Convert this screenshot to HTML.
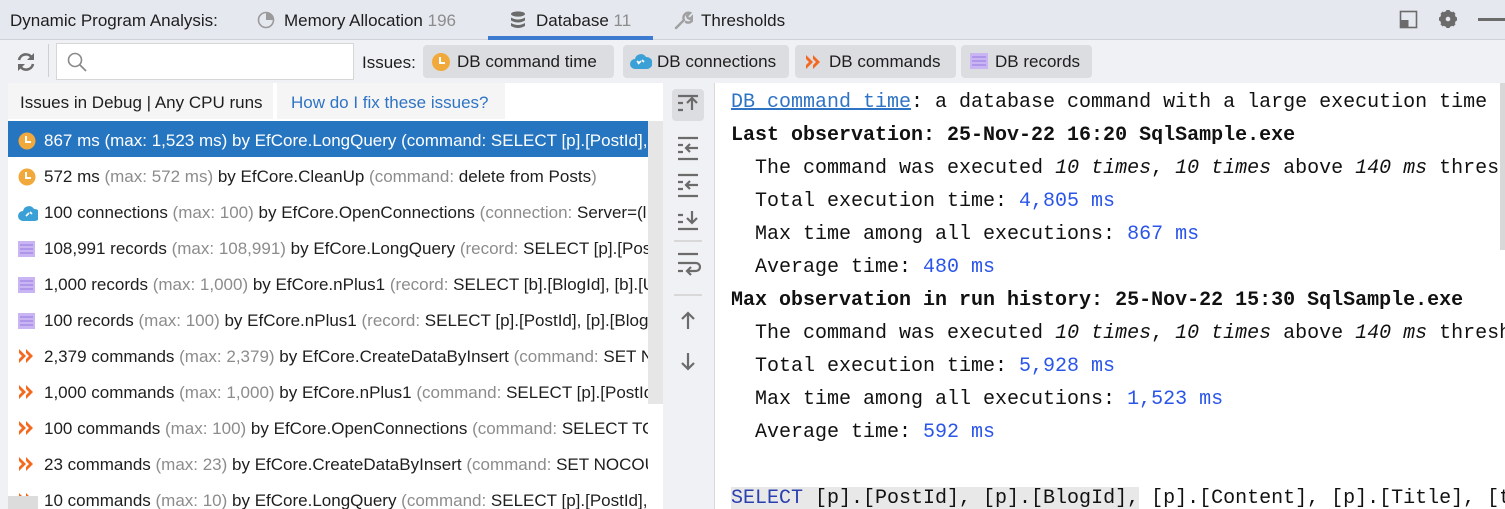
<!DOCTYPE html>
<html><head><meta charset="utf-8"><style>
*{margin:0;padding:0;box-sizing:border-box}
body{width:1505px;height:509px;overflow:hidden;background:#f0f1f4;font-family:"Liberation Sans",sans-serif;font-size:17px;color:#1e1e1e;position:relative}
.abs{position:absolute}
.top{left:0;top:0;width:1505px;height:40px;background:#e5e8ef;border-bottom:1px solid #cfd2d8}
.tab{top:1px;height:40px;line-height:40px;white-space:nowrap}
.gray{color:#8c8c8c}
.chip{top:45px;height:33px;line-height:34px;background:#dcdde0;border-radius:4px;padding:0 14px 0 34px;white-space:nowrap}
.left{left:8px;top:83px;width:655px;height:426px;background:#fff;overflow:hidden}
.row{position:absolute;left:0;width:640px;height:36px;line-height:39px;padding-left:36px;white-space:nowrap;overflow:hidden}
.row .ic{position:absolute;left:10px;top:11px}
.right{left:714px;top:83px;width:791px;height:426px;background:#fff;border-left:1px solid #d9d9d9;font-family:"Liberation Mono",monospace;font-size:20px;line-height:33px;white-space:pre;padding:3px 0 0 16px;overflow:hidden;color:#111}
.b{color:#2a55e8}
.ind{padding-left:24px}
</style></head><body>
<div class="abs top"></div>
<div class="abs tab" style="left:10px">Dynamic Program Analysis:</div>
<svg class="abs" style="left:257px;top:11px" width="18" height="18"><circle cx="9" cy="9" r="7.5" fill="none" stroke="#9a9a9a" stroke-width="1.6"/><path d="M9 9V1.5A7.5 7.5 0 0 1 16.5 9Z" fill="#9a9a9a"/></svg>
<div class="abs tab" style="left:284px">Memory Allocation <span class="gray">196</span></div>
<svg class="abs" style="left:510px;top:10px" width="16" height="20"><ellipse cx="8" cy="4" rx="7" ry="2.6" fill="#6b6b6b"/><path d="M1 7.5q7 4 14 0v3q-7 4-14 0z M1 13q7 4 14 0v3q-7 4-14 0z" fill="#6b6b6b"/></svg>
<div class="abs tab" style="left:536px">Database <span class="gray">11</span></div>
<div class="abs" style="left:488px;top:36px;width:165px;height:4px;background:#3d7bd1"></div>
<svg class="abs" style="left:673px;top:10px" width="20" height="20"><path d="M3 18L11 10M11 10a5 5 0 0 1 6-7l-3 3 1 2 2 1 3-3a5 5 0 0 1-7 6" stroke="#a0a0a0" stroke-width="2.4" fill="none" stroke-linecap="round"/></svg>
<div class="abs tab" style="left:701px">Thresholds</div>
<svg class="abs" style="left:1399px;top:10px" width="20" height="20"><rect x="1.5" y="1.5" width="16" height="16" fill="none" stroke="#6b6b6b" stroke-width="1.6"/><rect x="1.5" y="10" width="8" height="7.5" fill="#6b6b6b"/></svg>
<svg class="abs" style="left:1438px;top:9px" width="20" height="20"><circle cx="10" cy="10" r="6" fill="none" stroke="#6b6b6b" stroke-width="4"/><g stroke="#6b6b6b" stroke-width="3.5"><path d="M10 1v18M1 10h18M3.6 3.6l12.8 12.8M16.4 3.6L3.6 16.4"/></g><circle cx="10" cy="10" r="2.3" fill="#e5e8ef"/></svg>
<div class="abs" style="left:1478px;top:18px;width:27px;height:3px;background:#6b6b6b"></div>

<svg class="abs" style="left:15px;top:51px" width="22" height="22"><path d="M4 9a7 7 0 0 1 13-2M18 13a7 7 0 0 1-13 2" stroke="#6b6b6b" stroke-width="2.6" fill="none"/><path d="M19 2v7h-7z M3 20v-7h7z" fill="#6b6b6b"/></svg>
<div class="abs" style="left:48px;top:44px;width:1px;height:33px;background:#cfcfcf"></div>
<div class="abs" style="left:56px;top:43px;width:298px;height:37px;background:#fff;border:1px solid #d6d6d6"></div>
<svg class="abs" style="left:66px;top:51px" width="22" height="22"><circle cx="9" cy="9" r="6.5" stroke="#8a8a8a" stroke-width="1.6" fill="none"/><path d="M14 14l6 6" stroke="#8a8a8a" stroke-width="1.8"/></svg>
<div class="abs" style="left:362px;top:46px;line-height:33px">Issues:</div>
<div class="abs chip" style="left:423px;width:191px">DB command time</div>
<svg class="abs" style="left:431px;top:52px" width="20" height="20"><circle cx="10" cy="10" r="9" fill="#f2a93b"/><path d="M9 5v6h5" stroke="#fff" stroke-width="2" fill="none"/></svg>
<div class="abs chip" style="left:623px;width:166px">DB connections</div>
<svg class="abs" style="left:630px;top:52px" width="22" height="18"><path d="M5 17a5 5 0 0 1 0-10 6 6 0 0 1 11-2 5 5 0 0 1 1 12z" fill="#3aa0d6"/><path d="M8 12l3-3M12 8l2 2M7 9l2 2" stroke="#fff" stroke-width="1.6"/></svg>
<div class="abs chip" style="left:795px;width:161px">DB commands</div>
<svg class="abs" style="left:805px;top:54px" width="16" height="16"><path d="M1 1l7 7-7 7V11l3-3-3-3zM8 1l7 7-7 7V11l3-3-3-3z" fill="#f2691f"/></svg>
<div class="abs chip" style="left:961px;width:131px">DB records</div>
<svg class="abs" style="left:969px;top:52px" width="20" height="18"><rect x="1" y="1" width="18" height="16" fill="#c9b5f3"/><path d="M3 5h14M3 9h14M3 13h14" stroke="#a68be6" stroke-width="1.6"/></svg>

<div class="abs left">
 <div class="abs" style="left:0;top:0;width:265px;height:36px;line-height:40px;background:#f5f5f5;padding-left:12px">Issues in Debug | Any CPU runs</div>
 <div class="abs" style="left:269px;top:0;width:228px;height:36px;line-height:40px;background:#f5f5f5;padding-left:14px;color:#2f74c4">How do I fix these issues?</div>
 <div class="abs" style="left:640px;top:38px;width:15px;height:283px;background:#e6e6e6"></div>
 <div class="row" style="top:38px;background:#2675c0;color:#fff"><svg class="ic" width="18" height="18"><circle cx="9" cy="9" r="8.5" fill="#f2a93b"/><path d="M8 4v6h5" stroke="#fff" stroke-width="2" fill="none"/></svg>867 ms (max: 1,523 ms) by EfCore.LongQuery (command: SELECT [p].[PostId],</div>
 <div class="row" style="top:74px"><svg class="ic" width="18" height="18"><circle cx="9" cy="9" r="8.5" fill="#f2a93b"/><path d="M8 4v6h5" stroke="#fff" stroke-width="2" fill="none"/></svg>572 ms <span class="gray">(max: 572 ms)</span> by EfCore.CleanUp <span class="gray">(command:</span> delete from Posts<span class="gray">)</span></div>
 <div class="row" style="top:110px"><svg class="ic" width="20" height="18"><path d="M5 17a5 5 0 0 1 0-10 6 6 0 0 1 11-2 5 5 0 0 1 1 12z" fill="#3aa0d6"/><path d="M8 12l3-3M12 8l2 2" stroke="#fff" stroke-width="1.6"/></svg>100 connections <span class="gray">(max: 100)</span> by EfCore.OpenConnections <span class="gray">(connection:</span> Server=(l</div>
 <div class="row" style="top:146px"><svg class="ic" width="18" height="18"><rect x="0" y="1" width="17" height="16" fill="#c9b5f3"/><path d="M2 5h13M2 9h13M2 13h13" stroke="#a68be6" stroke-width="1.6"/></svg>108,991 records <span class="gray">(max: 108,991)</span> by EfCore.LongQuery <span class="gray">(record:</span> SELECT [p].[Post</div>
 <div class="row" style="top:182px"><svg class="ic" width="18" height="18"><rect x="0" y="1" width="17" height="16" fill="#c9b5f3"/><path d="M2 5h13M2 9h13M2 13h13" stroke="#a68be6" stroke-width="1.6"/></svg>1,000 records <span class="gray">(max: 1,000)</span> by EfCore.nPlus1 <span class="gray">(record:</span> SELECT [b].[BlogId], [b].[Ur</div>
 <div class="row" style="top:218px"><svg class="ic" width="18" height="18"><rect x="0" y="1" width="17" height="16" fill="#c9b5f3"/><path d="M2 5h13M2 9h13M2 13h13" stroke="#a68be6" stroke-width="1.6"/></svg>100 records <span class="gray">(max: 100)</span> by EfCore.nPlus1 <span class="gray">(record:</span> SELECT [p].[PostId], [p].[BlogId</div>
 <div class="row" style="top:254px"><svg class="ic" width="16" height="16"><path d="M1 1l7 7-7 7V11l3-3-3-3zM8 1l7 7-7 7V11l3-3-3-3z" fill="#f2691f"/></svg>2,379 commands <span class="gray">(max: 2,379)</span> by EfCore.CreateDataByInsert <span class="gray">(command:</span> SET N</div>
 <div class="row" style="top:290px"><svg class="ic" width="16" height="16"><path d="M1 1l7 7-7 7V11l3-3-3-3zM8 1l7 7-7 7V11l3-3-3-3z" fill="#f2691f"/></svg>1,000 commands <span class="gray">(max: 1,000)</span> by EfCore.nPlus1 <span class="gray">(command:</span> SELECT [p].[PostId</div>
 <div class="row" style="top:326px"><svg class="ic" width="16" height="16"><path d="M1 1l7 7-7 7V11l3-3-3-3zM8 1l7 7-7 7V11l3-3-3-3z" fill="#f2691f"/></svg>100 commands <span class="gray">(max: 100)</span> by EfCore.OpenConnections <span class="gray">(command:</span> SELECT TO</div>
 <div class="row" style="top:362px"><svg class="ic" width="16" height="16"><path d="M1 1l7 7-7 7V11l3-3-3-3zM8 1l7 7-7 7V11l3-3-3-3z" fill="#f2691f"/></svg>23 commands <span class="gray">(max: 23)</span> by EfCore.CreateDataByInsert <span class="gray">(command:</span> SET NOCOU</div>
 <div class="row" style="top:398px"><svg class="ic" width="16" height="16"><path d="M1 1l7 7-7 7V11l3-3-3-3zM8 1l7 7-7 7V11l3-3-3-3z" fill="#f2691f"/></svg>10 commands <span class="gray">(max: 10)</span> by EfCore.LongQuery <span class="gray">(command:</span> SELECT [p].[PostId],</div>
 <div class="abs" style="left:0;top:413px;width:30px;height:13px;background:#dcdcdc"></div>
</div>

<div class="abs" style="left:672px;top:89px;width:32px;height:32px;background:#dcdde0;border-radius:4px"></div>
<svg class="abs" style="left:664px;top:83px" width="48" height="300" stroke="#6b6b6b" stroke-width="2.2" fill="none">
 <path d="M14 13h20M14 20h5M14 27h5M28 27v-12M23 20l5-5 5 5"/>
 <path d="M14 55h20M14 62h5M14 69h5M14 76h20M22 65h12M26 61l-4 4 4 4"/>
 <path d="M14 92h20M14 99h5M14 106h5M14 113h20M22 102h12M26 98l-4 4 4 4"/>
 <path d="M14 132h5M14 139h5M14 146h20M28 128v12M23 135l5 5 5-5"/>
 <path d="M14 171h20M14 180h18a4 4 0 0 1 0 8h-8M27 184l-4 4 4 4M14 188h5"/>
 <path d="M24 246v-16M18 236l6-6 6 6"/>
 <path d="M24 270v16M18 280l6 6 6-6"/>
 <path d="M10 158h28M10 212h28" stroke="#d0d0d0" stroke-width="1.5"/>
</svg>

<div class="abs right"><span style="color:#2f74c4;text-decoration:underline">DB command time</span>: a database command with a large execution time
<b>Last observation: 25-Nov-22 16:20 SqlSample.exe</b>
<span class="ind">The command was executed <i>10 times</i>, <i>10 times</i> above <i>140 ms</i> threshold</span>
<span class="ind">Total execution time: <span class="b">4,805 ms</span></span>
<span class="ind">Max time among all executions: <span class="b">867 ms</span></span>
<span class="ind">Average time: <span class="b">480 ms</span></span>
<b>Max observation in run history: 25-Nov-22 15:30 SqlSample.exe</b>
<span class="ind">The command was executed <i>10 times</i>, <i>10 times</i> above <i>140 ms</i> threshold</span>
<span class="ind">Total execution time: <span class="b">5,928 ms</span></span>
<span class="ind">Max time among all executions: <span class="b">1,523 ms</span></span>
<span class="ind">Average time: <span class="b">592 ms</span></span>

<span style="background:#e8e8e8"><span style="color:#2a3fb0">SELECT</span> [p].[PostId], [p].[BlogId],</span> [p].[Content], [p].[Title], [t</div>
<div class="abs" style="left:1500px;top:83px;width:5px;height:167px;background:#d8d8d8"></div>
</body></html>
